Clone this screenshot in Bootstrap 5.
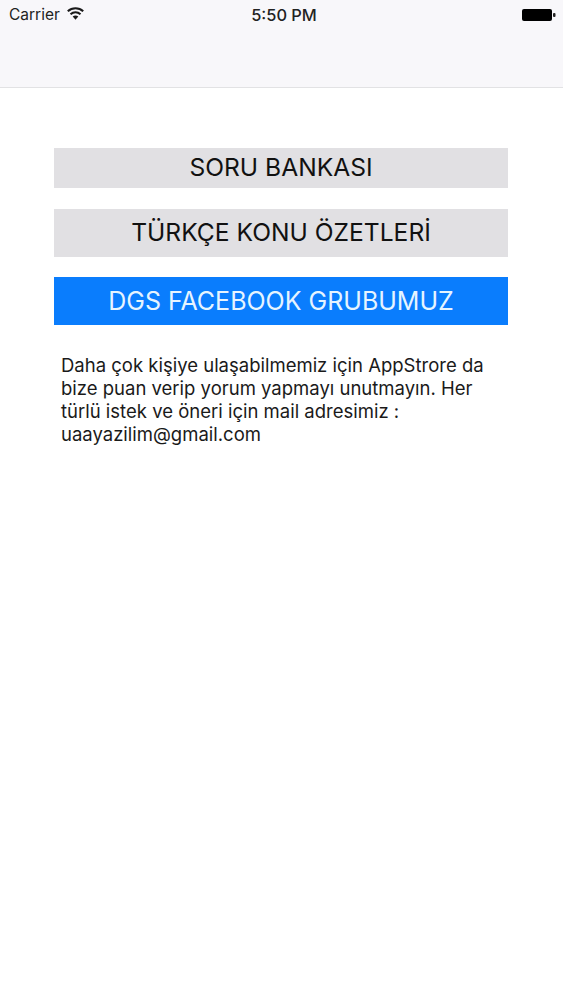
<!DOCTYPE html>
<html lang="tr">
<head>
<meta charset="utf-8">
<title>DGS</title>
<link href="https://cdn.jsdelivr.net/npm/bootstrap@5.3.0/dist/css/bootstrap.min.css" rel="stylesheet">
<style>
body { font-family: Inter, "Liberation Sans", sans-serif; background: #fff; color: #111; }
.top-bar { height: 88px; background: #f8f7fa; border-bottom: 1px solid #e2e2e4; }
.status-row { height: 30px; padding: 0 7px 0 9px; font-size: 15.5px; color: #222; }
.status-side { width: 120px; }
.status-gap { gap: 7px; }
.status-time { font-size: 16.400px; font-weight: 500; margin-left: 3px; }
.wifi-mark { margin-top: -3px; }
.content-area { padding: 60px 55px 0 54px; }
.tile { display: block; width: 100%; border: 0; border-radius: 0; font-size: 24.600px; font-weight: 400; line-height: 1.2; color: #111; background: #e1e0e3; padding: 0; }
.tile-a { height: 40px; }
.tile-b { height: 48px; margin-top: 21px; }
.tile-c { height: 48px; margin-top: 20px; background: #0a7dfd; color: #e6f4ff; font-size: 25px; }
.note { margin: 29px 0 0; padding-left: 7px; font-size: 18.500px; line-height: 23px; color: #1a1a1a; }
</style>
</head>
<body>
<header class="top-bar">
  <div class="status-row d-flex align-items-center justify-content-between">
    <div class="status-side status-gap d-flex align-items-center">
      <span>Carrier</span>
      <svg class="wifi-mark" width="17" height="13" viewBox="0 0 17 13" aria-hidden="true"><path d="M.8 4.300C5.200.3 11.800.3 16.200 4.300" fill="none" stroke="#1a1a1a" stroke-width="2.100"/><path d="M3.500 7.200C6.400 4.700 10.600 4.700 13.500 7.200" fill="none" stroke="#1a1a1a" stroke-width="2.100"/><path d="M8.500 12.800 5.700 9.500C7.300 8.200 9.700 8.200 11.300 9.500Z" fill="#1a1a1a"/></svg>
    </div>
    <span class="status-time">5:50 PM</span>
    <div class="status-side d-flex justify-content-end align-items-center">
      <svg width="34" height="14" viewBox="0 0 34 14" aria-hidden="true"><rect x="0" y="1" width="30" height="12" rx="2" fill="#000"/><rect x="31" y="5" width="2.500" height="4" rx="1" fill="#222"/></svg>
    </div>
  </div>
</header>
<main class="content-area">
  <button type="button" class="btn tile tile-a">SORU BANKASI</button>
  <button type="button" class="btn tile tile-b">TÜRKÇE KONU ÖZETLERİ</button>
  <button type="button" class="btn tile tile-c">DGS FACEBOOK GRUBUMUZ</button>
  <p class="note">Daha çok kişiye ulaşabilmemiz için AppStrore da bize puan verip yorum yapmayı unutmayın. Her türlü istek ve öneri için mail adresimiz : uaayazilim@gmail.com</p>
</main>
<script src="https://cdn.jsdelivr.net/npm/bootstrap@5.3.0/dist/js/bootstrap.bundle.min.js"></script>
</body>
</html>
